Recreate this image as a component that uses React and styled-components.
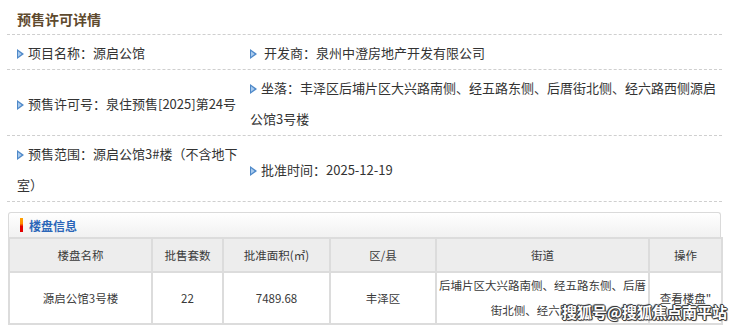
import React from 'react';
import styled, { createGlobalStyle } from 'styled-components';

const Global = createGlobalStyle`
  html, body { margin: 0; padding: 0; background: #fff; }
  body { font-family: "Noto Sans CJK SC", "Microsoft YaHei", sans-serif; color: #333; }
`;

const Page = styled.div`
  position: relative;
  width: 740px;
  height: 328px;
  overflow: hidden;
`;

const Section = styled.section`
  margin: 0 18px 0 7px;
`;

const Title = styled.h3`
  margin: 0;
  height: 30px;
  padding: 4px 0 0 10px;
  line-height: 30px;
  font-size: 14px;
  font-weight: bold;
  color: #5e4a2e;
  border-bottom: 1px dashed #cfcfcf;
`;

const InfoRow = styled.div`
  display: grid;
  grid-template-columns: 233px 466px;
  padding: 2px 6px 1px 10px;
  border-bottom: 1px dashed #cfcfcf;
  line-height: 31px;
  font-size: 13px;
  color: #333;
`;

const Cell = styled.div`
  align-self: center;
`;

const Arrow = styled.svg`
  width: 7px;
  height: 10px;
  margin-right: 4px;
  vertical-align: -1px;
`;

const Tri = () => (
  <Arrow viewBox="0 0 7 10">
    <polygon points="0,0 7,5 0,10" fill="#4f89c9" />
    <polygon points="1,2.2 4.6,5 1,7.8" fill="#a9cbee" />
  </Arrow>
);

const Box = styled.div`
  margin: 10px 19px 0 8px;
  width: 713px;
`;

const BoxHead = styled.div`
  height: 24px;
  border: 1px solid #dadada;
  border-bottom: none;
  border-radius: 3px 3px 0 0;
  background: linear-gradient(#ffffff, #f1f1f1);
  display: flex;
  align-items: center;
  padding-left: 11px;
`;

const Mark = styled.span`
  width: 3px;
  height: 14px;
  margin-right: 6px;
  background: linear-gradient(#ffa200 0%, #ff8a00 40%, #e30000 60%, #e30000 100%);
`;

const BoxTitle = styled.span`
  font-size: 12px;
  font-weight: bold;
  color: #2b66b8;
`;

const Table = styled.table`
  width: 713px;
  border-collapse: collapse;
  table-layout: fixed;
  font-size: 11.5px;
  color: #3a3a3a;
`;

const Th = styled.th`
  height: 32px;
  border: 2px solid #dcdcdc;
  background: #ededed;
  font-weight: normal;
  text-align: center;
  padding: 0;
`;

const Td = styled.td`
  height: 46px;
  border: 2px solid #dcdcdc;
  text-align: center;
  padding: 0 1px;
  line-height: ${p => (p.$multi ? '25px' : '18px')};
  white-space: nowrap;
`;

const Watermark = styled.div`
  position: absolute;
  left: 562px;
  top: 301px;
  font-size: 15px;
  font-weight: bold;
  color: #fff;
  white-space: nowrap;
  text-shadow: 1px 0 0 #3a3a3a, -1px 0 0 #3a3a3a, 0 1px 0 #3a3a3a, 0 -1px 0 #3a3a3a,
    1px 1px 1px #3a3a3a, -1px -1px 1px #3a3a3a;
`;

const cols = [143, 71, 107, 106, 213, 73];

export default function App() {
  return (
    <Page>
      <Global />
      <Section>
        <Title>预售许可详情</Title>
        <InfoRow>
          <Cell><Tri />项目名称：源启公馆</Cell>
          <Cell><Tri /> 开发商：泉州中澄房地产开发有限公司</Cell>
        </InfoRow>
        <InfoRow>
          <Cell><Tri />预售许可号：泉住预售[2025]第24号</Cell>
          <Cell><Tri />坐落：丰泽区后埔片区大兴路南侧、经五路东侧、后厝街北侧、经六路西侧源启公馆3号楼</Cell>
        </InfoRow>
        <InfoRow>
          <Cell><Tri />预售范围：源启公馆3#楼（不含地下室）</Cell>
          <Cell><Tri />批准时间：2025-12-19</Cell>
        </InfoRow>
      </Section>
      <Box>
        <BoxHead>
          <Mark />
          <BoxTitle>楼盘信息</BoxTitle>
        </BoxHead>
        <Table>
          <colgroup>
            {cols.map((w, i) => <col key={i} style={{ width: w }} />)}
          </colgroup>
          <thead>
            <tr>
              <Th>楼盘名称</Th>
              <Th>批售套数</Th>
              <Th>批准面积(㎡)</Th>
              <Th>区/县</Th>
              <Th>街道</Th>
              <Th>操作</Th>
            </tr>
          </thead>
          <tbody>
            <tr>
              <Td>源启公馆3号楼</Td>
              <Td>22</Td>
              <Td>7489.68</Td>
              <Td>丰泽区</Td>
              <Td $multi>后埔片区大兴路南侧、经五路东侧、后厝<br />街北侧、经六路西侧</Td>
              <Td>查看楼盘"</Td>
            </tr>
          </tbody>
        </Table>
      </Box>
      <Watermark>搜狐号@搜狐焦点南平站</Watermark>
    </Page>
  );
}
